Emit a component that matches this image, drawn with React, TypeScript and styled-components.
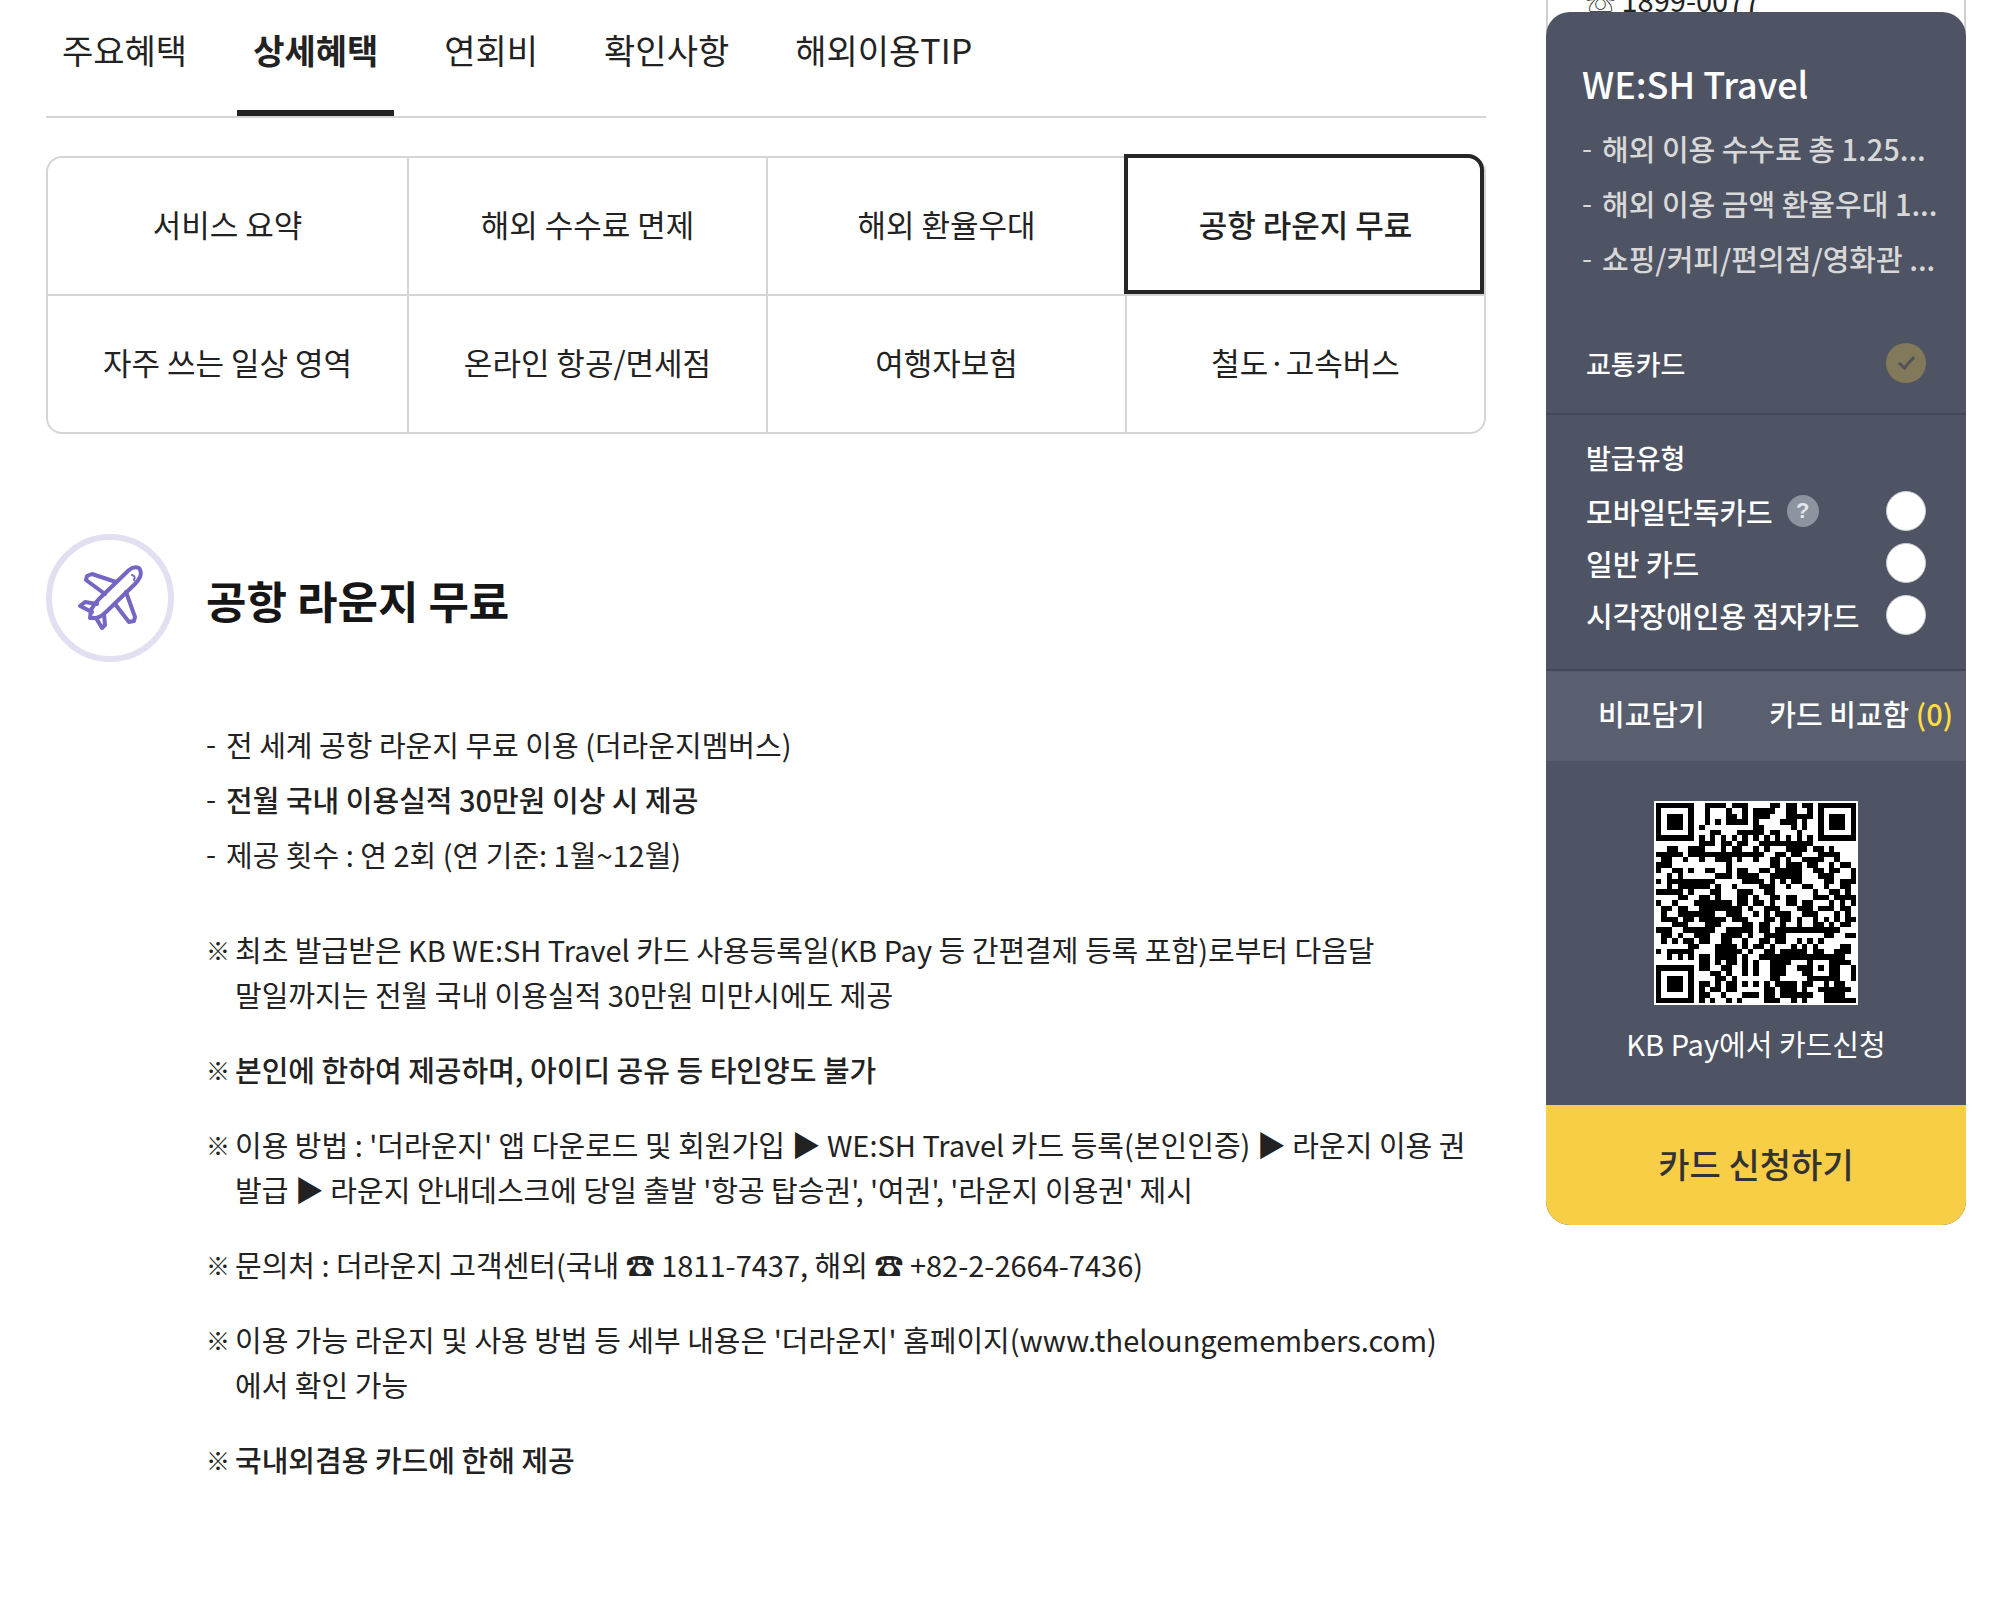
import React, { useState } from "react";
import styled, { createGlobalStyle } from "styled-components";

const GlobalStyle = createGlobalStyle`
  *, *::before, *::after { box-sizing: border-box; }
  body {
    margin: 0;
    background: #fff;
    color: #222;
    font-family: "Noto Sans CJK KR", "DejaVu Sans", sans-serif;
    font-size: 29px;
    line-height: 45px;
    word-break: keep-all;
  }
  button, input { font: inherit; color: inherit; }
  ul, h2, h3, p, fieldset { margin: 0; padding: 0; border: 0; }
`;

const Page = styled.div`
  display: flex;
  align-items: flex-start;
  gap: 60px;
  padding: 0 32px 0 46px;
`;

const Main = styled.main`
  flex: 1;
  min-width: 0;
`;

const Tabs = styled.nav`
  display: flex;
  gap: 34px;
  border-bottom: 2px solid #d5d5d5;
`;

const Tab = styled.button<{ $active: boolean }>`
  padding: 21px 16px 31px;
  border: 0;
  border-bottom: 6px solid ${(p) => (p.$active ? "#222" : "transparent")};
  background: none;
  font-size: 34px;
  line-height: 58px;
  font-weight: ${(p) => (p.$active ? 700 : 400)};
  white-space: nowrap;
  cursor: pointer;
`;

const ServiceGrid = styled.div`
  display: grid;
  grid-template-columns: repeat(4, 1fr);
  margin-top: 38px;
  border: 2px solid #d5d5d5;
  border-radius: 16px;
`;

const ServiceCell = styled.button<{ $active: boolean }>`
  position: relative;
  height: 138px;
  padding: 0 0 6px;
  border: 0 solid #d5d5d5;
  border-top-width: 2px;
  border-left-width: 2px;
  background: none;
  font-size: 31px;
  font-weight: ${(p) => (p.$active ? 500 : 400)};
  white-space: nowrap;
  cursor: pointer;
  &:nth-child(4n + 1) { border-left-width: 0; }
  &:nth-child(-n + 4) { height: 136px; border-top-width: 0; }
  &::after {
    content: ${(p) => (p.$active ? '""' : "none")};
    position: absolute;
    inset: -4px 0 0 -3px;
    border: 4px solid #262626;
  }
  &:nth-child(4)::after { border-top-right-radius: 16px; }
`;

const SectionHead = styled.header`
  display: flex;
  align-items: center;
  gap: 32px;
  margin-top: 100px;
  h2 {
    padding-top: 4px;
    font-size: 44px;
    line-height: 64px;
    font-weight: 700;
    color: #161616;
  }
`;

const Detail = styled.section`
  display: flex;
  flex-direction: column;
  gap: 50px;
  padding: 60px 0 0 160px;
`;

const MarkedList = styled.ul<{ $gap: number }>`
  display: flex;
  flex-direction: column;
  gap: ${(p) => p.$gap}px;
  list-style: none;
`;

const MarkedItem = styled.li<{ $mark: number; $strong?: boolean }>`
  display: grid;
  grid-template-columns: ${(p) => p.$mark}px 1fr;
  font-weight: ${(p) => (p.$strong ? 500 : 400)};
  white-space: nowrap;
`;

const Dash = styled.span`
  line-height: 40px;
  font-weight: 400;
`;

const NoteMark = styled.span`
  font-size: 24px;
  font-weight: 400;
`;

const Aside = styled.aside`
  flex: 0 0 420px;
`;

const ContactBox = styled.div`
  display: flex;
  align-items: flex-end;
  height: 40px;
  margin-bottom: -28px;
  padding: 0 38px 18px;
  border: 2px solid #d0d0d0;
  border-top: 0;
  border-bottom: 0;
  white-space: nowrap;
`;

const Card = styled.div`
  position: relative;
  overflow: hidden;
  border-radius: 24px;
  background: #4e5463;
  color: #fff;
  font-weight: 500;
`;

const CardIntro = styled.div`
  padding: 46px 16px 0 36px;
  h3 {
    margin-bottom: 18px;
    font-size: 36px;
    line-height: 50px;
    font-weight: 500;
  }
  ul { color: #d8d8d8; }
`;

const OptionRow = styled.label`
  display: flex;
  align-items: center;
  height: 52px;
  padding: 0 40px;
  white-space: nowrap;
  input { margin-left: auto; }
`;

const TransitRow = styled(OptionRow)`
  margin: 56px 0 24px;
  font-size: 27px;
`;

const IssueGroup = styled.fieldset`
  min-width: 0;
  legend {
    float: left;
    width: 100%;
    padding: 20px 40px 5px;
    font-size: 27px;
  }
  && { padding-bottom: 28px; border-top: 2px solid #434858; }
  label { clear: both; }
`;

const Tick = styled.input`
  appearance: none;
  flex: none;
  width: 40px;
  height: 40px;
  margin: 0;
  border-radius: 50%;
  background: #82795a;
  display: grid;
  place-items: center;
  &::after {
    content: "";
    width: 9px;
    height: 16px;
    margin-top: -5px;
    border: solid #50535c;
    border-width: 0 3px 3px 0;
    transform: rotate(42deg);
  }
`;

const Radio = styled.input`
  appearance: none;
  flex: none;
  width: 40px;
  height: 40px;
  margin: 0;
  border: 1px solid #c9cbd0;
  border-radius: 50%;
  background: #fff;
  &:checked { border: 12px solid #f7ce46; }
`;

const Help = styled.button`
  width: 32px;
  height: 32px;
  margin-left: 14px;
  padding: 0;
  border: 0;
  border-radius: 50%;
  background: #8d939f;
  color: #e2e4e8;
  font-family: "Liberation Sans", sans-serif;
  font-size: 22px;
  line-height: 32px;
  font-weight: 700;
`;

const CompareBar = styled.div`
  display: flex;
  justify-content: space-between;
  height: 92px;
  padding: 0 13px 6px 52px;
  border-top: 2px solid #434858;
  background: #595f6e;
`;

const CompareButton = styled.button`
  padding: 0;
  border: 0;
  background: none;
  font-size: 29px;
  font-weight: 500;
  white-space: nowrap;
  em { font-style: normal; color: #ffdd40; }
`;

const QrBlock = styled.div`
  display: flex;
  flex-direction: column;
  align-items: center;
  gap: 16px;
  padding: 40px 0 39px;
  font-weight: 400;
`;

const QrSvg = styled.svg`
  width: 204px;
  height: 204px;
  padding: 2px;
  background: #fff;
`;

const Apply = styled.button`
  display: block;
  width: 100%;
  height: 120px;
  padding: 0 0 4px;
  border: 0;
  background: #f7ce46;
  color: #333;
  font-size: 34px;
  font-weight: 500;
`;

const QR_ROWS = [
  "1111111001111011100001101101101111111",
  "1000001001000100101111001100101000001",
  "1011101001000110101110001111101011101",
  "1011101001010111101000011101001011101",
  "1011101010000000001100000101001011101",
  "1000001000110001111101100010001000001",
  "1111111010101010101010101010101111111",
  "0000000011101101100111111111100000000",
  "0011001110001011001010001111011010000",
  "1111101111111111111100110110001111000",
  "0110010010011101001001101001111001000",
  "1110000000000100000001101110110010110",
  "1001101001100101100110111110011011001",
  "0010100000011101111001111110001110001",
  "1011111111100000111101010110000110111",
  "0010111111010010000111001001100100110",
  "1111101000110001110011000000010011010",
  "0000110011010001101001101100011101111",
  "1001000111111101101101001101100010101",
  "0110110011111111010011100011101110110",
  "0100111111100111001010111001110001010",
  "0111011011111011100011011010010101011",
  "0001110001110000110110010010011010110",
  "1110011111100111110110111111111111000",
  "0110100111001111010011110000000110011",
  "0101011011001100100110110010101000000",
  "0000001100011110101101000101010000110",
  "1011111000011111010011011111011001110",
  "0010101011011110100111111111111111100",
  "0000000011010110101001111000100011110",
  "1111111011001100101001110011101011001",
  "1000001000110100101001110001100011001",
  "1011101000011010000001100000111111001",
  "1011101011010110101010111101100101100",
  "1011101010110110000011011101001111110",
  "1000001011001000111011011111100111100",
  "1111111010100101000011100101000111111",
];

function QrCode() {
  const d = QR_ROWS.map((row, y) =>
    [...row].map((c, x) => (c === "1" ? `M${x} ${y}h1v1h-1z` : "")).join("")
  ).join("");
  return (
    <QrSvg viewBox="0 0 37 37" role="img" shapeRendering="crispEdges">
      <path d={d} fill="#000" />
    </QrSvg>
  );
}

function PlaneIcon() {
  return (
    <svg width="128" height="128" viewBox="0 0 128 128" fill="none" aria-hidden="true">
      <circle cx="64" cy="64" r="61" stroke="#e2dff1" strokeWidth="6" />
      <g stroke="#7566c4" strokeWidth="4" strokeLinejoin="round" strokeLinecap="round">
        <path d="M44 84 45 76Q48 70 53 65L83 36Q88 32 93 34Q96 38 94 43Q92 47 89 50L60 78Q55 83 50 84Z" />
        <path d="M70 48 46 40 41 42 40 46 59 60" />
        <path d="M80 58 89 83 88 87 83 88 69 70" />
        <path d="M51 70 39 68 34 72 46 78" />
        <path d="M50 84 56 94 59 91 58 80" />
        <path d="M86 41Q90 42 88 46" strokeWidth="2" />
      </g>
    </svg>
  );
}

const TABS = ["주요혜택", "상세혜택", "연회비", "확인사항", "해외이용TIP"];

const SERVICES = [
  "서비스 요약", "해외 수수료 면제", "해외 환율우대", "공항 라운지 무료",
  "자주 쓰는 일상 영역", "온라인 항공/면세점", "여행자보험", "철도·고속버스",
];

const BENEFITS = [
  { text: "전 세계 공항 라운지 무료 이용 (더라운지멤버스)" },
  { text: "전월 국내 이용실적 30만원 이상 시 제공", strong: true },
  { text: "제공 횟수 : 연 2회 (연 기준: 1월~12월)" },
];

const NOTES: { lines: string[]; strong?: boolean }[] = [
  {
    lines: [
      "최초 발급받은 KB WE:SH Travel 카드 사용등록일(KB Pay 등 간편결제 등록 포함)로부터 다음달",
      "말일까지는 전월 국내 이용실적 30만원 미만시에도 제공",
    ],
  },
  { lines: ["본인에 한하여 제공하며, 아이디 공유 등 타인양도 불가"], strong: true },
  {
    lines: [
      "이용 방법 : '더라운지' 앱 다운로드 및 회원가입 ▶ WE:SH Travel 카드 등록(본인인증) ▶ 라운지 이용 권",
      "발급 ▶ 라운지 안내데스크에 당일 출발 '항공 탑승권', '여권', '라운지 이용권' 제시",
    ],
  },
  { lines: ["문의처 : 더라운지 고객센터(국내 ☎ 1811-7437, 해외 ☎ +82-2-2664-7436)"] },
  {
    lines: [
      "이용 가능 라운지 및 사용 방법 등 세부 내용은 '더라운지' 홈페이지(www.theloungemembers.com)",
      "에서 확인 가능",
    ],
  },
  { lines: ["국내외겸용 카드에 한해 제공"], strong: true },
];

const SUMMARY = ["해외 이용 수수료 총 1.25...", "해외 이용 금액 환율우대 1...", "쇼핑/커피/편의점/영화관 ..."];

const ISSUE_TYPES = ["모바일단독카드", "일반 카드", "시각장애인용 점자카드"];

export default function App() {
  const [tab, setTab] = useState(1);
  const [service, setService] = useState(3);

  return (
    <>
      <GlobalStyle />
      <Page>
        <Main>
          <Tabs>
            {TABS.map((name, i) => (
              <Tab key={name} $active={i === tab} onClick={() => setTab(i)}>{name}</Tab>
            ))}
          </Tabs>
          <ServiceGrid>
            {SERVICES.map((name, i) => (
              <ServiceCell key={name} $active={i === service} onClick={() => setService(i)}>{name}</ServiceCell>
            ))}
          </ServiceGrid>
          <SectionHead>
            <PlaneIcon />
            <h2>공항 라운지 무료</h2>
          </SectionHead>
          <Detail>
            <MarkedList $gap={10}>
              {BENEFITS.map((b) => (
                <MarkedItem key={b.text} $mark={20} $strong={b.strong}>
                  <Dash>-</Dash>
                  <span>{b.text}</span>
                </MarkedItem>
              ))}
            </MarkedList>
            <MarkedList $gap={30}>
              {NOTES.map((n) => (
                <MarkedItem key={n.lines[0]} $mark={29} $strong={n.strong}>
                  <NoteMark>※</NoteMark>
                  <p>
                    {n.lines.map((line, i) => (
                      <React.Fragment key={line}>{i > 0 && <br />}{line}</React.Fragment>
                    ))}
                  </p>
                </MarkedItem>
              ))}
            </MarkedList>
          </Detail>
        </Main>
        <Aside>
          <ContactBox>☏ 1899-0077</ContactBox>
          <Card>
            <CardIntro>
              <h3>WE:SH Travel</h3>
              <MarkedList $gap={10}>
                {SUMMARY.map((s) => (
                  <MarkedItem key={s} $mark={20} $strong>
                    <Dash>-</Dash>
                    <span>{s}</span>
                  </MarkedItem>
                ))}
              </MarkedList>
            </CardIntro>
            <TransitRow>
              교통카드
              <Tick type="checkbox" defaultChecked disabled />
            </TransitRow>
            <IssueGroup>
              <legend>발급유형</legend>
              {ISSUE_TYPES.map((name, i) => (
                <OptionRow key={name}>
                  {name}
                  {i === 0 && <Help type="button">?</Help>}
                  <Radio type="radio" name="issue" />
                </OptionRow>
              ))}
            </IssueGroup>
            <CompareBar>
              <CompareButton>비교담기</CompareButton>
              <CompareButton>카드 비교함 <em>(0)</em></CompareButton>
            </CompareBar>
            <QrBlock>
              <QrCode />
              <p>KB Pay에서 카드신청</p>
            </QrBlock>
            <Apply>카드 신청하기</Apply>
          </Card>
        </Aside>
      </Page>
    </>
  );
}
